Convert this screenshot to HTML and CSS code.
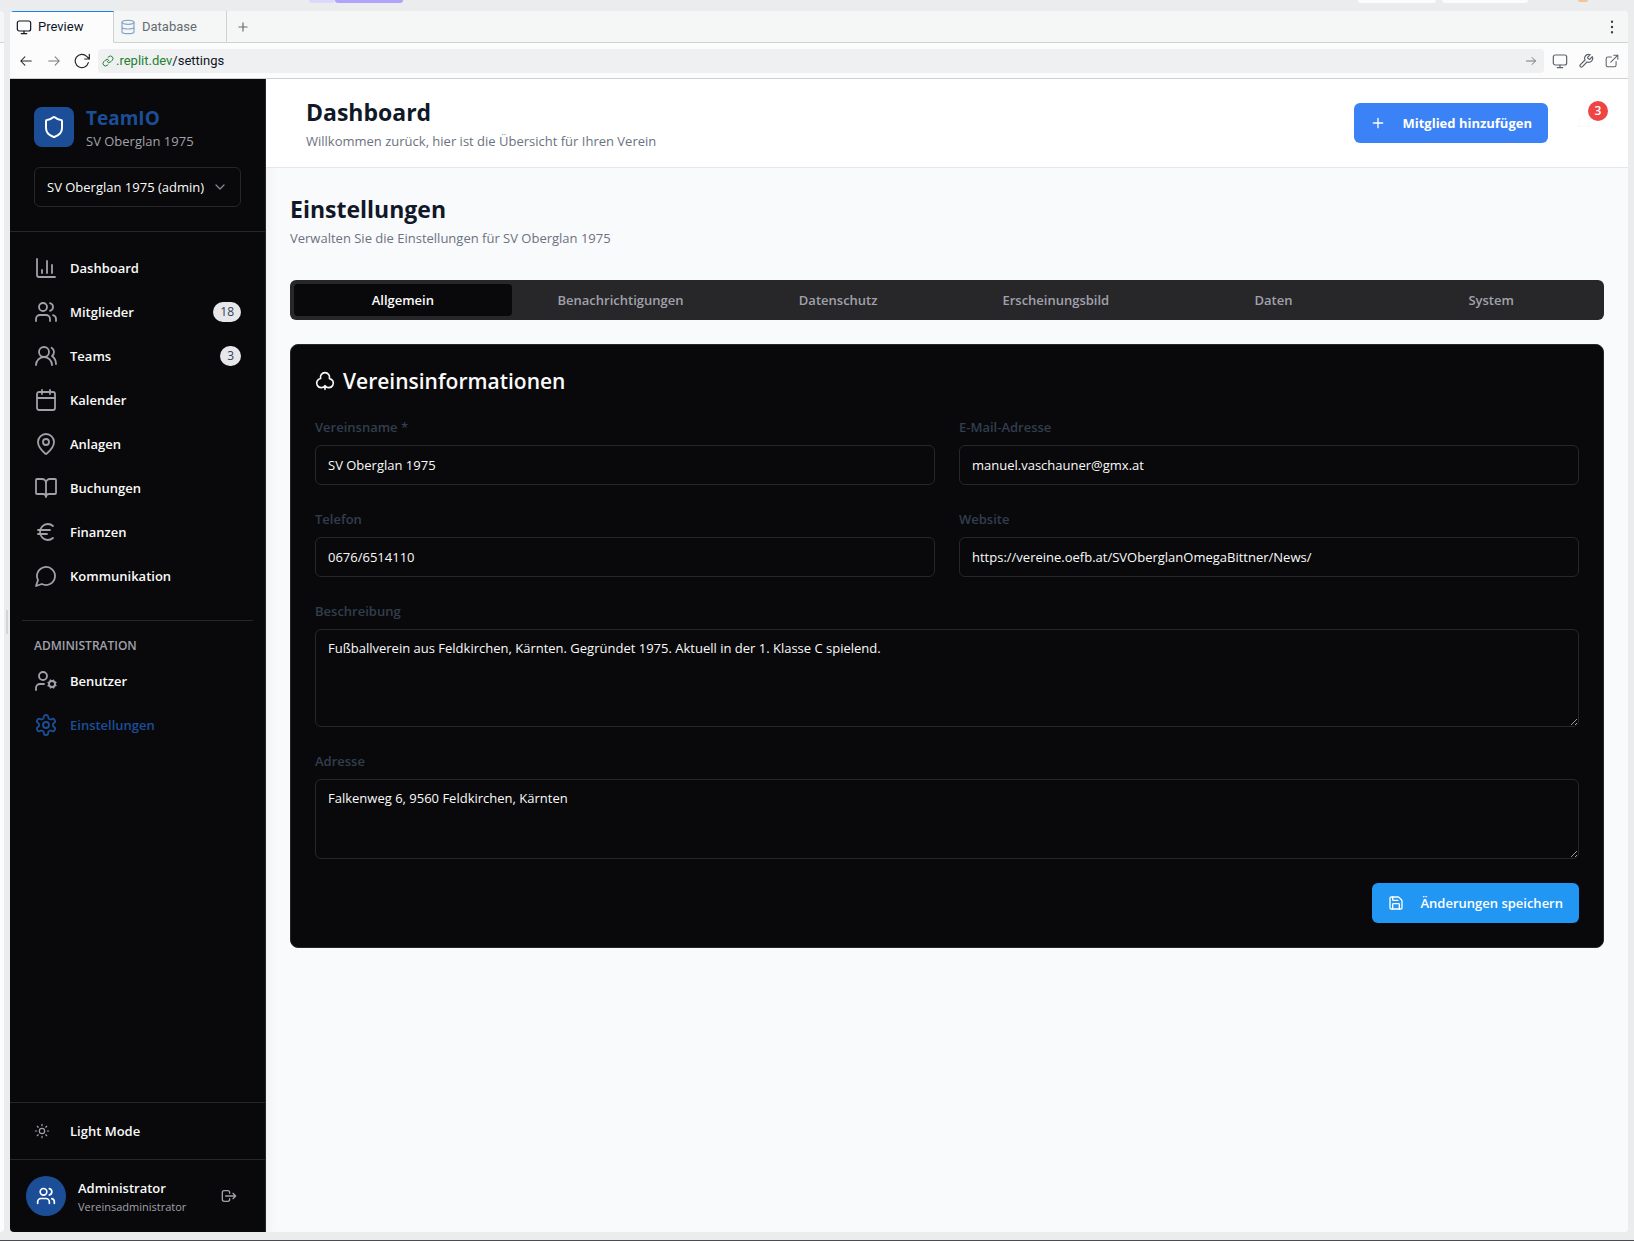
FILE: index.html
```html
<!DOCTYPE html>
<html lang="de">
<head>
<meta charset="utf-8">
<meta name="viewport" content="width=device-width, initial-scale=1">
<title>TeamIO – Einstellungen</title>
<link rel="stylesheet" href="styles.css">
</head>
<body>
<svg class="sprite" aria-hidden="true">
  <symbol id="i-monitor" viewBox="0 0 24 24"><rect x="2" y="3" width="20" height="15" rx="3"/><path d="M8 22h8M12 18v4"/></symbol>
  <symbol id="i-database" viewBox="0 0 24 24"><ellipse cx="12" cy="5" rx="9" ry="3"/><path d="M3 5v14a9 3 0 0 0 18 0V5M3 12a9 3 0 0 0 18 0"/></symbol>
  <symbol id="i-plus" viewBox="0 0 24 24"><path d="M5 12h14M12 5v14"/></symbol>
  <symbol id="i-dots" viewBox="0 0 24 24"><path d="M12 3v.01M12 12v.01M12 21v.01"/></symbol>
  <symbol id="i-left" viewBox="0 0 24 24"><path d="m10 5-7 7 7 7M3 12h18"/></symbol>
  <symbol id="i-right" viewBox="0 0 24 24"><path d="M3 12h18M14 5l7 7-7 7"/></symbol>
  <symbol id="i-reload" viewBox="0 0 24 24"><path d="M21.500 14.500A10 10 0 1 1 19 5l4 4M23 2v7h-7"/></symbol>
  <symbol id="i-link" viewBox="0 0 24 24"><path d="M10 13a5 5 0 0 0 7.540.540l3-3a5 5 0 0 0-7.070-7.070l-1.720 1.710"/><path d="M14 11a5 5 0 0 0-7.540-.540l-3 3a5 5 0 0 0 7.070 7.070l1.710-1.710"/></symbol>
  <symbol id="i-wrench" viewBox="0 0 24 24"><path d="M14.700 6.300a1 1 0 0 0 0 1.400l1.600 1.600a1 1 0 0 0 1.400 0l3.770-3.770a6 6 0 0 1-7.940 7.940l-6.910 6.910a2.120 2.120 0 0 1-3-3l6.910-6.910a6 6 0 0 1 7.940-7.940l-3.760 3.760z"/></symbol>
  <symbol id="i-external" viewBox="0 0 24 24"><path d="M15 2h7v7M10 14 22 2M19 13v6a3 3 0 0 1-3 3H5a3 3 0 0 1-3-3V8a3 3 0 0 1 3-3h6"/></symbol>
  <symbol id="i-shield" viewBox="0 0 24 24"><path d="M20 13c0 5-3.500 7.500-7.660 8.950a1 1 0 0 1-.670-.010C7.500 20.500 4 18 4 13V6a1 1 0 0 1 1-1c2 0 4.500-1.200 6.240-2.720a1.170 1.170 0 0 1 1.520 0C14.510 3.810 17 5 19 5a1 1 0 0 1 1 1z"/></symbol>
  <symbol id="i-chevron" viewBox="0 0 24 24"><path d="m6 9 6 6 6-6"/></symbol>
  <symbol id="i-chart" viewBox="0 0 24 24"><path d="M3 3v16a2 2 0 0 0 2 2h16M18 17V9M13 17V5M8 17v-3"/></symbol>
  <symbol id="i-users" viewBox="0 0 24 24"><path d="M16 21v-2a4 4 0 0 0-4-4H6a4 4 0 0 0-4 4v2M22 21v-2a4 4 0 0 0-3-3.870M16 3.130a4 4 0 0 1 0 7.750"/><circle cx="9" cy="7" r="4"/></symbol>
  <symbol id="i-team" viewBox="0 0 24 24"><path d="M18 21a8 8 0 0 0-16 0"/><circle cx="10" cy="8" r="5"/><path d="M22 20c0-3.370-2-6.500-4-8a5 5 0 0 0-.450-8.300"/></symbol>
  <symbol id="i-calendar" viewBox="0 0 24 24"><path d="M8 2v4M16 2v4M3 10h18"/><rect x="3" y="4" width="18" height="18" rx="2"/></symbol>
  <symbol id="i-pin" viewBox="0 0 24 24"><path d="M20 10c0 4.990-5.540 10.190-7.400 11.800a1 1 0 0 1-1.200 0C9.540 20.190 4 14.990 4 10a8 8 0 0 1 16 0"/><circle cx="12" cy="10" r="3"/></symbol>
  <symbol id="i-book" viewBox="0 0 24 24"><path d="M12 7v14M3 18a1 1 0 0 1-1-1V4a1 1 0 0 1 1-1h5a4 4 0 0 1 4 4 4 4 0 0 1 4-4h5a1 1 0 0 1 1 1v13a1 1 0 0 1-1 1h-6a3 3 0 0 0-3 3 3 3 0 0 0-3-3z"/></symbol>
  <symbol id="i-euro" viewBox="0 0 24 24"><path d="M4 10h12M4 14h9M19 6a7.700 7.700 0 0 0-5.200-2A7.900 7.900 0 0 0 6 12c0 4.400 3.500 8 7.800 8 2 0 3.800-.800 5.200-2"/></symbol>
  <symbol id="i-message" viewBox="0 0 24 24"><path d="M7.900 20A9 9 0 1 0 4 16.100L2 22Z"/></symbol>
  <symbol id="i-usercog" viewBox="0 0 24 24"><circle cx="18" cy="15" r="3"/><circle cx="9" cy="7" r="4"/><path d="M10 15H6a4 4 0 0 0-4 4v2M21.700 16.400l-.900-.300M15.200 13.900l-.900-.300M16.600 18.700l.300-.900M19.100 12.200l.300-.900M19.600 18.700l-.400-1M16.800 12.300l-.400-1M14.300 16.600l1-.400M20.700 13.800l1-.400"/></symbol>
  <symbol id="i-settings" viewBox="0 0 24 24"><path d="M12.220 2h-.440a2 2 0 0 0-2 2v.180a2 2 0 0 1-1 1.730l-.430.250a2 2 0 0 1-2 0l-.150-.080a2 2 0 0 0-2.730.730l-.220.380a2 2 0 0 0 .730 2.730l.150.100a2 2 0 0 1 1 1.720v.510a2 2 0 0 1-1 1.740l-.150.090a2 2 0 0 0-.730 2.730l.220.380a2 2 0 0 0 2.730.730l.150-.080a2 2 0 0 1 2 0l.430.250a2 2 0 0 1 1 1.730V20a2 2 0 0 0 2 2h.440a2 2 0 0 0 2-2v-.180a2 2 0 0 1 1-1.730l.430-.250a2 2 0 0 1 2 0l.150.080a2 2 0 0 0 2.730-.730l.220-.390a2 2 0 0 0-.730-2.730l-.150-.080a2 2 0 0 1-1-1.740v-.500a2 2 0 0 1 1-1.740l.150-.090a2 2 0 0 0 .730-2.730l-.220-.380a2 2 0 0 0-2.730-.730l-.150.080a2 2 0 0 1-2 0l-.430-.250a2 2 0 0 1-1-1.730V4a2 2 0 0 0-2-2z"/><circle cx="12" cy="12" r="3"/></symbol>
  <symbol id="i-sun" viewBox="0 0 24 24"><circle cx="12" cy="12" r="4"/><path d="M12 2v2M12 20v2M4.930 4.930l1.410 1.410M17.660 17.660l1.410 1.410M2 12h2M20 12h2M6.340 17.660l-1.410 1.410M19.070 4.930l-1.410 1.410"/></symbol>
  <symbol id="i-logout" viewBox="0 0 24 24"><path d="M13 8V7a3 3 0 0 0-3-3H5a3 3 0 0 0-3 3v10a3 3 0 0 0 3 3h5a3 3 0 0 0 3-3v-1M7 12h15M18 8l4 4-4 4"/></symbol>
  <symbol id="i-club" viewBox="0 0 24 24"><path d="M17.280 9.050a5.500 5.500 0 1 0-10.560 0A5.500 5.500 0 1 0 12 17.660a5.500 5.500 0 1 0 5.280-8.600ZM12 17.660V22"/></symbol>
  <symbol id="i-save" viewBox="0 0 24 24"><path d="M15.200 3a2 2 0 0 1 1.400.600l3.800 3.800a2 2 0 0 1 .600 1.400V19a2 2 0 0 1-2 2H5a2 2 0 0 1-2-2V5a2 2 0 0 1 2-2z"/><path d="M17 21v-7a1 1 0 0 0-1-1H8a1 1 0 0 0-1 1v7M7 3v4a1 1 0 0 0 1 1h7"/></symbol>
  <symbol id="i-bell" viewBox="0 0 24 24"><path d="M10.270 21a2 2 0 0 0 3.460 0M3.260 15.330A1 1 0 0 0 4 17h16a1 1 0 0 0 .740-1.670C19.410 13.960 18 12.500 18 8A6 6 0 0 0 6 8c0 4.500-1.410 5.960-2.740 7.330"/></symbol>
</svg>

<div class="desktop">
  <div class="topstrip">
    <span class="chip chip-soft"></span><span class="chip chip-violet"></span>
    <span class="chip chip-white"></span><span class="chip chip-white chip-wide"></span><span class="chip chip-avatar"></span>
  </div>
  <div class="workspace">
    <div class="neighbour"></div>
    <div class="gutter"><span class="grip"></span></div>

    <div class="pane">
      <div class="tabbar">
        <button class="wtab wtab-active" type="button"><svg class="icon s16"><use href="#i-monitor"/></svg>Preview</button>
        <button class="wtab wtab-data" type="button"><svg class="icon s16"><use href="#i-database"/></svg>Database</button>
        <button class="plain newtab" type="button" aria-label="Neuer Tab"><svg class="icon s14"><use href="#i-plus"/></svg></button>
        <button class="plain more" type="button" aria-label="Mehr"><svg class="icon s14"><use href="#i-dots"/></svg></button>
      </div>
      <div class="toolbar">
        <div class="history">
          <button class="plain" type="button" aria-label="Zurück"><svg class="icon s14"><use href="#i-left"/></svg></button>
          <button class="plain dim" type="button" aria-label="Vor"><svg class="icon s14"><use href="#i-right"/></svg></button>
          <button class="plain" type="button" aria-label="Neu laden"><svg class="icon s16"><use href="#i-reload"/></svg></button>
        </div>
        <div class="url"><svg class="icon s12 green"><use href="#i-link"/></svg><span class="url-text"><span class="green">.replit.dev</span>/settings</span><svg class="icon s12 go"><use href="#i-right"/></svg></div>
        <div class="tools">
          <button class="plain" type="button" aria-label="Gerät"><svg class="icon s16"><use href="#i-monitor"/></svg></button>
          <button class="plain" type="button" aria-label="Werkzeuge"><svg class="icon s16"><use href="#i-wrench"/></svg></button>
          <button class="plain" type="button" aria-label="Extern öffnen"><svg class="icon s14"><use href="#i-external"/></svg></button>
        </div>
      </div>

      <div class="app">
        <aside class="sidebar">
          <div class="brand-block">
            <div class="brand">
              <span class="logo"><svg class="icon s24"><use href="#i-shield"/></svg></span>
              <div><div class="brand-name">TeamIO</div><div class="brand-club">SV Oberglan 1975</div></div>
            </div>
            <div class="select-wrap">
              <select class="club-select" aria-label="Verein"><option>SV Oberglan 1975 (admin)</option></select>
              <svg class="icon s16 select-chevron"><use href="#i-chevron"/></svg>
            </div>
          </div>
          <nav class="nav">
            <a class="nav-item" href="#dashboard"><svg class="icon s24"><use href="#i-chart"/></svg>Dashboard</a>
            <a class="nav-item" href="#mitglieder"><svg class="icon s24"><use href="#i-users"/></svg>Mitglieder<span class="count">18</span></a>
            <a class="nav-item" href="#teams"><svg class="icon s24"><use href="#i-team"/></svg>Teams<span class="count">3</span></a>
            <a class="nav-item" href="#kalender"><svg class="icon s24"><use href="#i-calendar"/></svg>Kalender</a>
            <a class="nav-item" href="#anlagen"><svg class="icon s24"><use href="#i-pin"/></svg>Anlagen</a>
            <a class="nav-item" href="#buchungen"><svg class="icon s24"><use href="#i-book"/></svg>Buchungen</a>
            <a class="nav-item" href="#finanzen"><svg class="icon s24"><use href="#i-euro"/></svg>Finanzen</a>
            <a class="nav-item" href="#kommunikation"><svg class="icon s24"><use href="#i-message"/></svg>Kommunikation</a>
            <div class="nav-section">
              <div class="nav-heading">ADMINISTRATION</div>
              <a class="nav-item" href="#benutzer"><svg class="icon s24"><use href="#i-usercog"/></svg>Benutzer</a>
              <a class="nav-item nav-current" href="#einstellungen" aria-current="page"><svg class="icon s24"><use href="#i-settings"/></svg>Einstellungen</a>
            </div>
          </nav>
          <div class="mode-row">
            <button class="nav-item mode" type="button"><svg class="icon s16"><use href="#i-sun"/></svg>Light Mode</button>
          </div>
          <div class="user-row">
            <span class="avatar"><svg class="icon s20"><use href="#i-users"/></svg></span>
            <div class="user-text"><div class="user-name">Administrator</div><div class="user-role">Vereinsadministrator</div></div>
            <button class="plain logout" type="button" aria-label="Abmelden"><svg class="icon s16"><use href="#i-logout"/></svg></button>
          </div>
        </aside>

        <div class="main">
          <header class="topbar">
            <div><h1 class="title">Dashboard</h1><p class="subtitle">Willkommen zurück, hier ist die Übersicht für Ihren Verein</p></div>
            <div class="topbar-actions">
              <button class="btn btn-add" type="button"><svg class="icon s16"><use href="#i-plus"/></svg>Mitglied hinzufügen</button>
              <button class="plain bell" type="button" aria-label="Benachrichtigungen"><svg class="icon s16"><use href="#i-bell"/></svg><span class="bell-count">3</span></button>
            </div>
          </header>

          <main class="content">
            <h2 class="title">Einstellungen</h2>
            <p class="subtitle">Verwalten Sie die Einstellungen für SV Oberglan 1975</p>
            <div class="tabs" role="tablist">
              <button class="tab tab-active" role="tab" aria-selected="true" type="button">Allgemein</button>
              <button class="tab" role="tab" type="button">Benachrichtigungen</button>
              <button class="tab" role="tab" type="button">Datenschutz</button>
              <button class="tab" role="tab" type="button">Erscheinungsbild</button>
              <button class="tab" role="tab" type="button">Daten</button>
              <button class="tab" role="tab" type="button">System</button>
            </div>
            <form class="card">
              <h3 class="card-title"><svg class="icon s20"><use href="#i-club"/></svg>Vereinsinformationen</h3>
              <div class="grid">
                <div class="field"><label for="name">Vereinsname *</label><input class="control" id="name" type="text" value="SV Oberglan 1975"></div>
                <div class="field"><label for="mail">E-Mail-Adresse</label><input class="control" id="mail" type="email" value="manuel.vaschauner@gmx.at"></div>
                <div class="field"><label for="tel">Telefon</label><input class="control" id="tel" type="tel" value="0676/6514110"></div>
                <div class="field"><label for="web">Website</label><input class="control" id="web" type="url" value="https://vereine.oefb.at/SVOberglanOmegaBittner/News/"></div>
              </div>
              <div class="field"><label for="desc">Beschreibung</label><textarea class="control area" id="desc" rows="4">Fußballverein aus Feldkirchen, Kärnten. Gegründet 1975. Aktuell in der 1. Klasse C spielend.</textarea></div>
              <div class="field"><label for="addr">Adresse</label><textarea class="control area" id="addr" rows="3">Falkenweg 6, 9560 Feldkirchen, Kärnten</textarea></div>
              <div class="form-actions"><button class="btn btn-save" type="button"><svg class="icon s16"><use href="#i-save"/></svg>Änderungen speichern</button></div>
            </form>
          </main>
        </div>
      </div>
    </div>
  </div>
</div>
</body>
</html>
```
FILE: styles.css
```css
:root {
  --ink: #09090b;
  --line: #27272a;
  --muted: #a1a1aa;
  --primary: #1c4e98;
  --ui: "Segoe UI", "Open Sans", "Noto Sans", sans-serif;
}
* { box-sizing: border-box; }
body { margin: 0; font: 13px/20px var(--ui); background: #ebecee; }
h1, h2, h3, p { margin: 0; }
button, input, select, textarea { font: inherit; }
button { cursor: pointer; }
.sprite { position: absolute; width: 0; height: 0; }

.icon { flex: none; display: block; fill: none; stroke: currentColor; stroke-width: 2; stroke-linecap: round; stroke-linejoin: round; }
.s12 { width: 12px; height: 12px; }
.s14 { width: 14px; height: 14px; }
.s16 { width: 16px; height: 16px; }
.s20 { width: 20px; height: 20px; }
.s24 { width: 24px; height: 24px; }
.plain { display: flex; align-items: center; justify-content: center; padding: 0; border: 0; background: none; color: inherit; }

/* Workspace frame */
.desktop { display: flex; flex-direction: column; min-height: 100vh; padding-bottom: 8px; border-bottom: 1px solid #4b4c50; }
.topstrip { display: flex; height: 11px; padding: 0 46px 0 309px; }
.chip { height: 3px; border-radius: 0 0 4px 4px; }
.chip-soft { width: 26px; background: #ddd8fa; }
.chip-violet { width: 68px; margin-right: auto; background: #b1a3fb; }
.chip-white { width: 78px; margin-right: 6px; background: #fcfcfc; }
.chip-wide { width: 86px; margin-right: 50px; }
.chip-avatar { width: 10px; height: 2px; background: #f5c694; }
.workspace { flex: 1; display: flex; padding-right: 6px; }
.neighbour { width: 4px; border-radius: 0 4px 4px 0; background: linear-gradient(#f5f6f6 31px, #cfd1d2 31px, #cfd1d2 32px, #fcfcfc 32px); }
.gutter { display: flex; align-items: center; width: 6px; padding-left: 2px; }
.grip { width: 2px; height: 24px; background: #d3d5d7; }
.pane { flex: 1; min-width: 0; display: flex; flex-direction: column; border-radius: 4px; overflow: hidden; background: #fcfcfc; color: #3b3f45; }

.tabbar { display: flex; height: 32px; background: #f5f7f6; box-shadow: inset 0 -1px #cfd1d2; }
.wtab { display: flex; align-items: center; gap: 6px; width: 113px; padding: 0 0 0 6px; border: 0; border-right: 1px solid #cfd1d2; border-bottom: 1px solid #cfd1d2; background: none; color: #646a72; font: 13px/20px Roboto, sans-serif; }
.wtab-active { width: 104px; background: #fcfcfc; color: #0e1525; border-top: 1px solid #1a80e5; border-bottom-color: #fcfcfc; }
.wtab .icon { stroke-width: 1.8; }
.wtab-data .icon { color: #87a5c6; }
.newtab { width: 32px; }
.newtab .icon { color: #646a72; }
.more { width: 32px; margin-left: auto; }
.more .icon { stroke-width: 4; }

.toolbar { display: flex; align-items: center; height: 36px; border-bottom: 1px solid #cfd1d2; }
.history { display: flex; width: 88px; padding-left: 2px; color: #25282d; }
.history .plain { width: 28px; }
.history .icon { stroke-width: 1.8; }
.history .dim { color: #75797f; }
.url { flex: 1; display: flex; align-items: center; height: 24px; padding: 0 7px 0 4px; border-radius: 4px; background: #eff0f2; }
.url-text { margin-left: 2px; font: 13px/20px Roboto, sans-serif; color: #0e1525; }
.green { color: #22802f; }
.go { margin-left: auto; color: #75797f; }
.tools { display: flex; padding: 0 3px; color: #5d636b; }
.tools .plain { width: 26px; }
.tools .icon { stroke-width: 1.8; }

/* App shell */
.app { flex: 1; display: flex; background: #f9fafc; }
.sidebar { flex: none; width: 256px; display: flex; flex-direction: column; background: var(--ink); border-right: 1px solid var(--line); color: #fafafa; box-shadow: 0 10px 15px -3px rgba(0, 0, 0, .1); }
.brand-block { padding: 24px; border-bottom: 1px solid var(--line); }
.brand { display: flex; align-items: center; gap: 12px; height: 48px; margin-bottom: 16px; }
.logo { display: flex; align-items: center; justify-content: center; width: 40px; height: 40px; border-radius: 8px; background: var(--primary); color: #fff; }
.brand-name { padding-top: 2px; font-size: 19px; line-height: 26px; font-weight: 700; color: var(--primary); }
.brand-club { color: var(--muted); }
.select-wrap { position: relative; }
.club-select { display: block; appearance: none; width: 100%; height: 40px; padding: 0 12px; border: 1px solid var(--line); border-radius: 6px; background: var(--ink); color: #fafafa; }
.select-chevron { position: absolute; right: 13px; top: 12px; color: #85858b; }

.nav { flex: 1; display: flex; flex-direction: column; gap: 4px; padding: 16px 12px; }
.nav-item { display: flex; align-items: center; gap: 12px; height: 40px; padding: 0 12px; font-weight: 600; color: #fafafa; text-decoration: none; }
.nav-item .icon { color: var(--muted); stroke-width: 1.8; }
.count { margin-left: auto; padding: 0 7px; border-radius: 10px; background: #e5e7eb; color: #374151; font-size: 12px; font-weight: 400; }
.nav-section { display: flex; flex-direction: column; margin-top: 20px; padding-top: 16px; border-top: 1px solid var(--line); }
.nav-section .nav-item + .nav-item { margin-top: 4px; }
.nav-heading { padding: 0 12px; height: 24px; line-height: 18px; font-size: 12px; font-weight: 600; color: var(--muted); }
.nav-item.nav-current, .nav-current .icon { color: var(--primary); }
.mode-row { padding: 8px 12px; border-top: 1px solid var(--line); }
.mode { width: 100%; gap: 20px; border: 0; background: none; }
.user-row { display: flex; align-items: center; gap: 12px; padding: 16px; border-top: 1px solid var(--line); }
.avatar { display: flex; align-items: center; justify-content: center; width: 40px; height: 40px; border-radius: 50%; background: var(--primary); color: #fff; }
.user-text { padding-top: 2px; }
.user-name { font-weight: 600; }
.user-role { font-size: 11px; line-height: 18px; color: var(--muted); }
.logout { width: 40px; height: 40px; margin-left: auto; color: var(--muted); }

/* Page */
.main { flex: 1; min-width: 0; }
.topbar { display: flex; justify-content: space-between; align-items: center; height: 89px; padding: 0 24px 0 40px; border-bottom: 1px solid #e5e7eb; background: #fff; }
.title { font-size: 23px; line-height: 34px; font-weight: 700; color: #111827; }
.subtitle { margin-top: 2px; color: #6b7280; }
.topbar-actions { display: flex; gap: 16px; }
.btn { display: flex; align-items: center; gap: 16px; height: 40px; padding: 0 16px; border: 0; border-radius: 6px; color: #fff; font-weight: 600; }
.btn-add { background: #3b82f6; font-weight: 700; }
.btn-save { background: #2196f3; }
.bell { position: relative; width: 40px; height: 40px; color: #fafafa; }
.bell-count { position: absolute; top: -2px; right: -4px; width: 20px; height: 20px; border-radius: 50%; background: #ef4444; color: #fff; font-size: 12px; line-height: 20px; font-weight: 600; }
.content { padding: 24px; }
.tabs { display: grid; grid-template-columns: repeat(6, 1fr); height: 40px; margin: 32px 0 24px; padding: 4px; border-radius: 6px; background: var(--line); }
.tab { border: 0; border-radius: 4px; padding: 0; background: none; color: var(--muted); font-weight: 600; }
.tab-active { background: var(--ink); color: #fafafa; }
.card { display: flex; flex-direction: column; gap: 24px; padding: 24px; border: 1px solid var(--line); border-radius: 8px; background: var(--ink); color: #fafafa; }
.card-title { display: flex; align-items: center; gap: 8px; font-size: 21px; line-height: 24px; font-weight: 600; }
.grid { display: grid; grid-template-columns: 1fr 1fr; gap: 24px; }
.field { display: flex; flex-direction: column; gap: 8px; }
.field label { color: #323e4e; font-weight: 600; }
.control { display: block; width: 100%; height: 40px; padding: 8px 12px; border: 1px solid var(--line); border-radius: 6px; background: var(--ink); color: #fafafa; line-height: 20px; }
.area { height: auto; min-height: 80px; resize: vertical; }
.form-actions { display: flex; justify-content: flex-end; }
```
